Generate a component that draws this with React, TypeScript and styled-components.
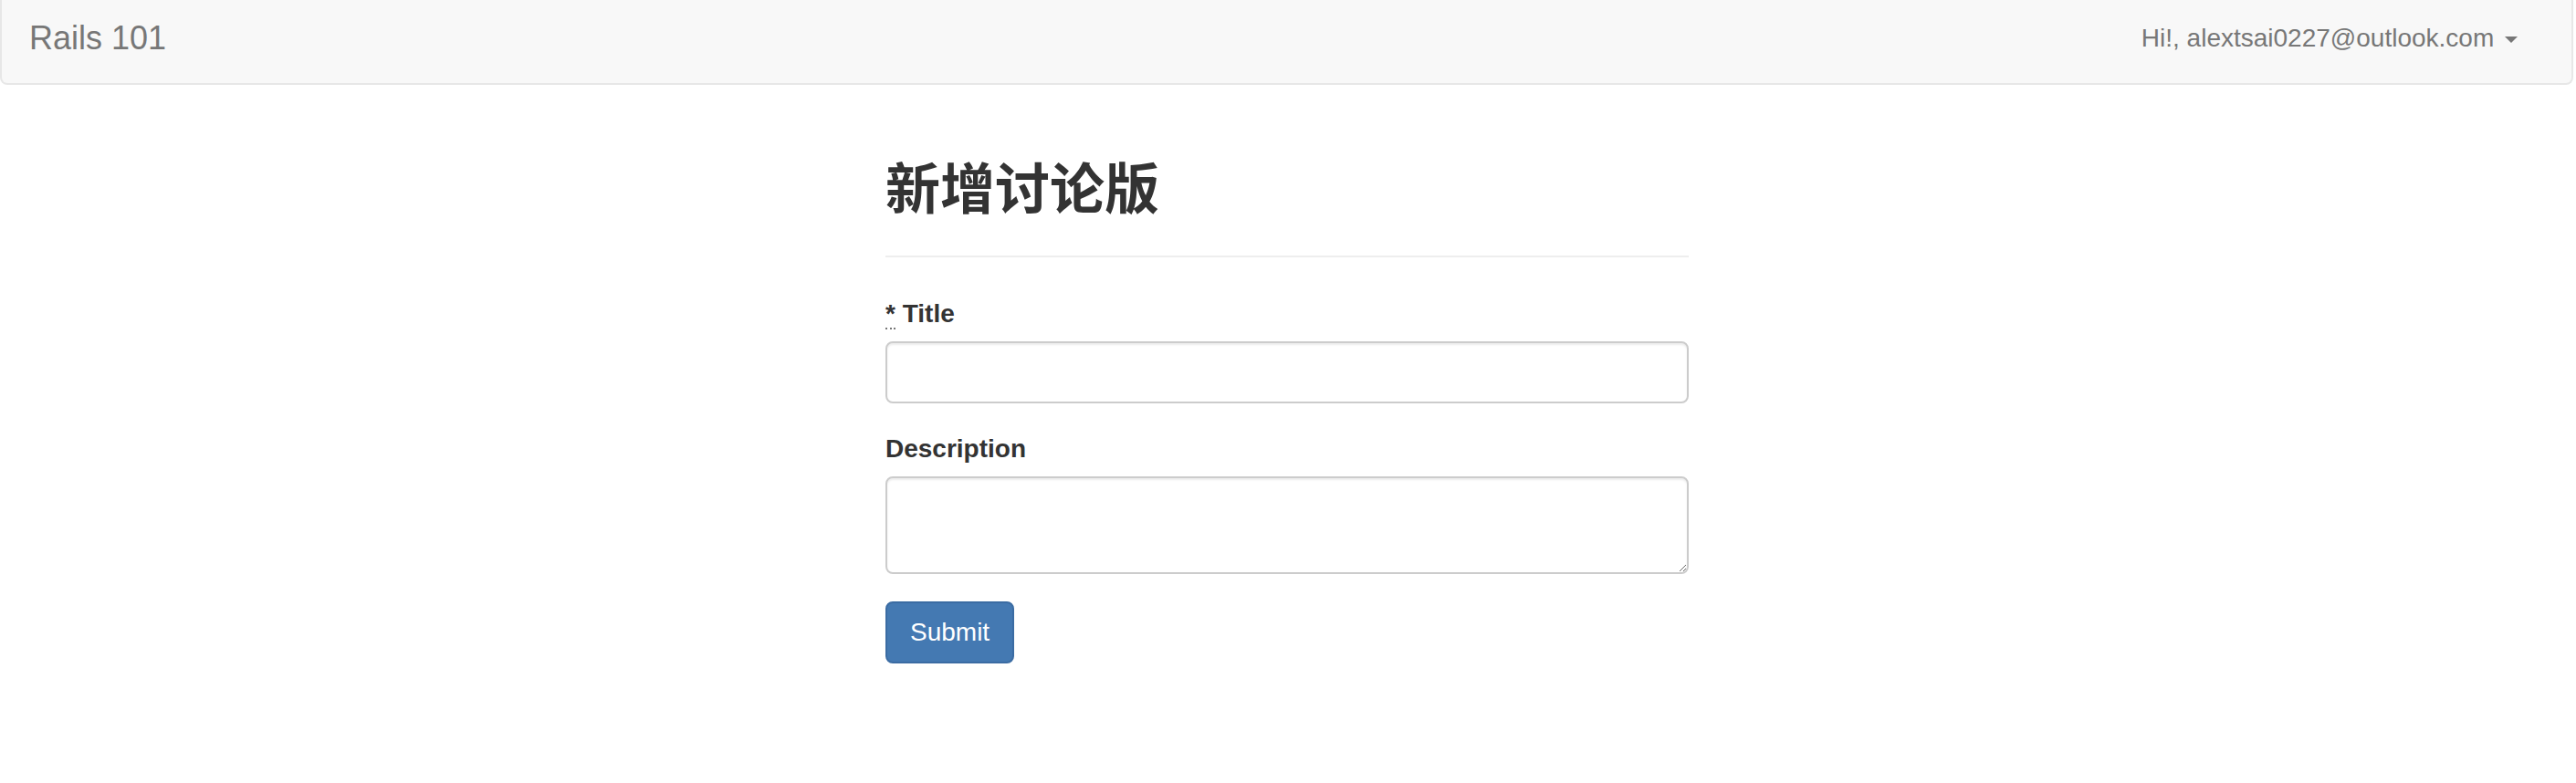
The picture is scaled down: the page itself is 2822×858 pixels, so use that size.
import React from "react";
import styled, { createGlobalStyle, css } from "styled-components";

const GlobalStyle = createGlobalStyle`
  html, body { margin: 0; padding: 0; background: #fff; }
  body {
    font-family: "Liberation Sans", Arial, "Noto Sans CJK SC", sans-serif;
    color: #333;
  }
  *, *::before, *::after { box-sizing: border-box; }
`;

const Page = styled.div`
  padding-right: 2px;
`;

const Navbar = styled.nav`
  display: flex;
  justify-content: space-between;
  align-items: flex-start;
  height: 93px;
  margin-right: 1px;
  padding: 22px 59px 0 30px;
  background: #f8f8f8;
  border: 2px solid #e7e7e7;
  border-top: 0;
  border-radius: 0 0 8px 8px;
`;

const Brand = styled.a`
  font-size: 36px;
  line-height: 40px;
  color: #777;
  text-decoration: none;
`;

const UserMenu = styled.a`
  font-size: 28px;
  line-height: 40px;
  color: #777;
  text-decoration: none;
  white-space: nowrap;
`;

const Caret = styled.span`
  display: inline-block;
  width: 0;
  height: 0;
  margin-left: 4px;
  vertical-align: middle;
  border-top: 7px solid #777;
  border-left: 7px solid transparent;
  border-right: 7px solid transparent;
`;

const Main = styled.main`
  width: 880px;
  margin: 0 auto;
  padding-top: 83px;
`;

const PageHeader = styled.div`
  padding-bottom: 18px;
  margin-bottom: 42px;
  border-bottom: 2px solid #eee;
`;

const Heading = styled.h2`
  margin: 0 0 20px;
  font-family: "Liberation Sans", "Noto Sans CJK SC", sans-serif;
  font-size: 60px;
  font-weight: 700;
  line-height: 66px;
  color: #333;
`;

const FormGroup = styled.div`
  margin-bottom: 30px;
`;

const Label = styled.label`
  display: block;
  margin-bottom: 10px;
  font-size: 28px;
  font-weight: 700;
  line-height: 40px;
  color: #333;
`;

const Required = styled.abbr`
  text-decoration: none;
  border-bottom: 2px dotted #777;
  cursor: help;
`;

const controlStyles = css`
  display: block;
  width: 100%;
  padding: 12px 24px;
  font-family: "Liberation Sans", Arial, sans-serif;
  font-size: 28px;
  color: #555;
  background: #fff;
  border: 2px solid #ccc;
  border-radius: 8px;
  box-shadow: inset 0 2px 2px rgba(0, 0, 0, 0.075);
  outline: none;
`;

const TextInput = styled.input`
  ${controlStyles}
  height: 68px;
`;

const TextArea = styled.textarea`
  ${controlStyles}
  height: 107px;
  resize: vertical;
`;

const SubmitButton = styled.button`
  height: 68px;
  padding: 0 25px;
  font-family: "Liberation Sans", Arial, sans-serif;
  font-size: 28px;
  line-height: 40px;
  color: #fff;
  background: #4479b2;
  border: 2px solid #3b6ca3;
  border-radius: 8px;
  cursor: pointer;
`;

export default function App() {
  return (
    <Page>
      <GlobalStyle />
      <Navbar>
        <Brand href="#">Rails 101</Brand>
        <UserMenu href="#">
          Hi!, alextsai0227@outlook.com <Caret />
        </UserMenu>
      </Navbar>
      <Main>
        <PageHeader>
          <Heading>新增讨论版</Heading>
        </PageHeader>
        <form onSubmit={(e) => e.preventDefault()}>
          <FormGroup>
            <Label htmlFor="group_title">
              <Required title="required">*</Required> Title
            </Label>
            <TextInput id="group_title" type="text" />
          </FormGroup>
          <FormGroup>
            <Label htmlFor="group_description">Description</Label>
            <TextArea id="group_description" />
          </FormGroup>
          <SubmitButton type="submit">Submit</SubmitButton>
        </form>
      </Main>
    </Page>
  );
}
